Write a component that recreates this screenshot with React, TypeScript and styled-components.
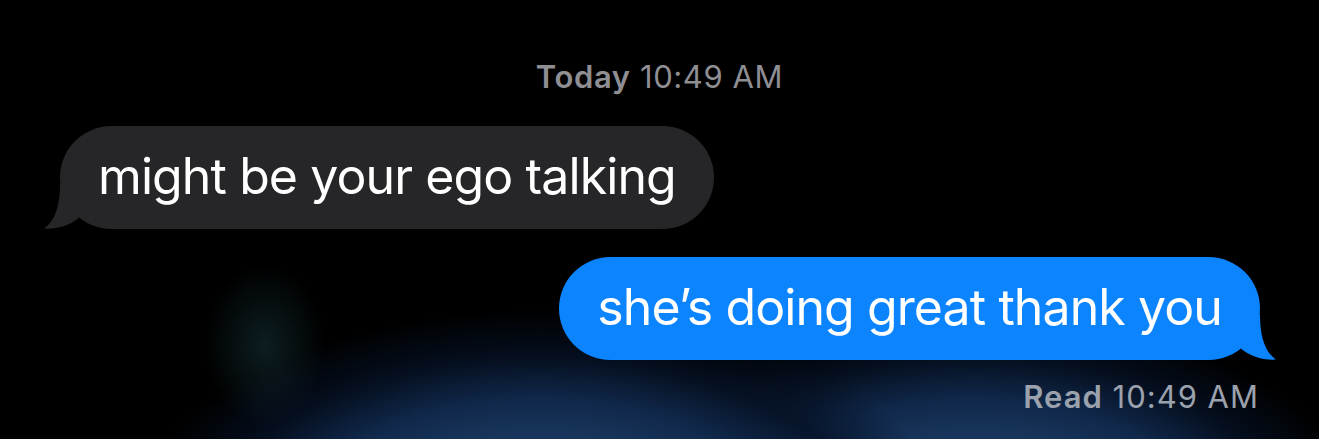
import styled, { createGlobalStyle } from 'styled-components';

const GlobalStyle = createGlobalStyle`
    html, body {
        margin: 0;
        padding: 0;
        background: #000;
        overflow: hidden;
    }
`;

// dark chat backdrop with the soft blue glow rising from the bottom edge
const Screen = styled.div`
    width: 1319px;
    height: 439px;
    box-sizing: border-box;
    padding: 58px 44px 0 44px;
    display: flex;
    flex-direction: column;
    font-family: Inter, "Noto Sans", sans-serif;
    -webkit-font-smoothing: antialiased;
    background-color: #000;
    background-image:
        radial-gradient(ellipse 60px 80px at 265px 345px, rgba(28, 66, 74, 0.45), rgba(28, 66, 74, 0) 100%),
        radial-gradient(ellipse 420px 235px at 540px 545px, #1f4372 0%, #1b3b64 40%, #10284a 62%, rgba(6, 18, 38, 0.8) 80%, rgba(0, 0, 0, 0) 100%),
        radial-gradient(ellipse 400px 235px at 975px 545px, #1f4372 0%, #1b3b64 40%, #10284a 62%, rgba(6, 18, 38, 0.8) 80%, rgba(0, 0, 0, 0) 100%);
`;

const Stamp = styled.div<{ $align: 'center' | 'right' }>`
    font-size: 31px;
    line-height: 38px;
    letter-spacing: ${p => (p.$align === 'right' ? '1px' : '0.6px')};
    color: ${p => (p.$align === 'right' ? '#9ba2ad' : '#8e8e93')};
    text-align: ${p => p.$align};
    padding-right: ${p => (p.$align === 'right' ? '16px' : '0')};
    margin-top: ${p => (p.$align === 'right' ? '18px' : '0')};

    b {
        font-weight: 600;
    }
`;

const Row = styled.div<{ $mine?: boolean }>`
    display: flex;
    justify-content: ${p => (p.$mine ? 'flex-end' : 'flex-start')};
    padding: ${p => (p.$mine ? '28px 15px 0 0' : '0 0 0 16px')};
    margin-top: ${p => (p.$mine ? '0' : '30px')};
`;

const Bubble = styled.div<{ $mine?: boolean }>`
    position: relative;
    height: 103px;
    box-sizing: border-box;
    padding: 0 38px 4px 38px;
    display: flex;
    align-items: center;
    border-radius: 52px;
    font-size: 50px;
    letter-spacing: -0.9px;
    color: #fff;
    background: ${p => (p.$mine ? '#0b84fe' : '#262628')};

    svg {
        position: absolute;
        bottom: 0;
        width: 40px;
        height: 45px;
        ${p => (p.$mine ? 'right: -16px; transform: scaleX(-1);' : 'left: -16px;')}
    }
`;

function Tail({ color }: { color: string }) {
    return (
        <svg viewBox="0 0 40 45">
            <path
                d="M16 0 C16 22 11 37 0 44.6 C11 45.5 25 42 34 34.5 L40 26 L40 0 Z"
                fill={color}
            />
        </svg>
    );
}

export default function App() {
    return (
        <>
            <GlobalStyle />
            <Screen>
                <Stamp $align="center"><b>Today</b> 10:49 AM</Stamp>
                <Row>
                    <Bubble>
                        might be your ego talking
                        <Tail color="#262628" />
                    </Bubble>
                </Row>
                <Row $mine>
                    <Bubble $mine>
                        she’s doing great thank you
                        <Tail color="#0b84fe" />
                    </Bubble>
                </Row>
                <Stamp $align="right"><b>Read</b> 10:49 AM</Stamp>
            </Screen>
        </>
    );
}
